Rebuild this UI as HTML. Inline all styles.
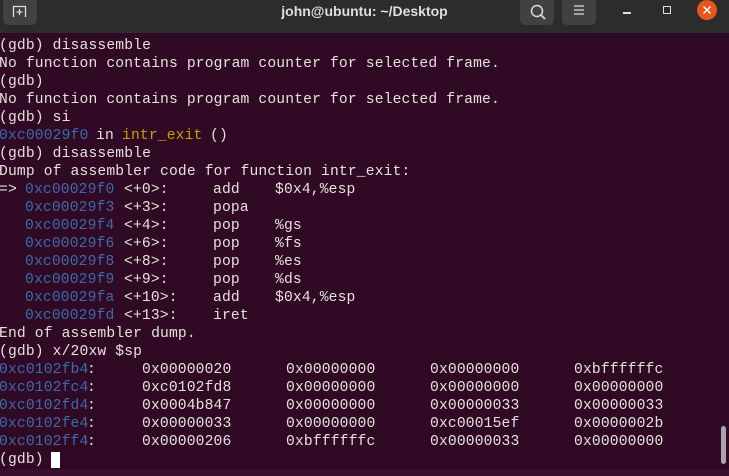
<!DOCTYPE html>
<html><head><style>
body{margin:0;width:729px;height:476px;overflow:hidden;background:#300a24;font-family:"Liberation Mono",monospace;}
#tb{position:absolute;left:0;top:0;width:729px;height:33px;background:#2c2c2c;}
.btn{position:absolute;top:0;height:25px;background:#414141;border-radius:0 0 5px 5px;}
#title{position:absolute;left:0;width:729px;top:3px;text-align:center;color:#dfdfdf;font:bold 14px "Liberation Sans",sans-serif;}
#term{position:absolute;left:-1px;top:37px;color:#e6e1dc;font-size:14.67px;line-height:18px;letter-spacing:0.15px;}
.l{position:relative;height:18px;white-space:pre;}
.l span{position:absolute;top:0;}
.b{color:#3d6aac}.y{color:#c4a000}
</style></head><body>
<div id="tb">
<div class="btn" style="left:3px;width:34px;"></div>
<svg style="position:absolute;left:12px;top:4px" width="16" height="14"><path d="M1.5 13V2.5h12V13" fill="none" stroke="#ddd" stroke-width="1.3"/><path d="M7.5 5v6M4.5 8h6" stroke="#ddd" stroke-width="1.3"/></svg>
<div id="title">john@ubuntu: ~/Desktop</div>
<div class="btn" style="left:520px;width:34px;"></div>
<svg style="position:absolute;left:529px;top:3px" width="18" height="18"><circle cx="8" cy="8" r="5.5" fill="none" stroke="#ddd" stroke-width="1.5"/><path d="M12 12l4 4" stroke="#ddd" stroke-width="1.6"/></svg>
<div class="btn" style="left:562px;width:34px;"></div>
<svg style="position:absolute;left:572px;top:4px" width="14" height="12"><path d="M2 2h10M2 6h10M2 10h10" stroke="#ddd" stroke-width="1.2"/></svg>
<div style="position:absolute;left:623px;top:12px;width:8px;height:1.5px;background:#ddd"></div>
<div style="position:absolute;left:663px;top:6px;width:6px;height:6px;border:1.3px solid #ddd"></div>
<div style="position:absolute;left:697px;top:0px;width:20px;height:20px;border-radius:50%;background:#e95420"></div>
<svg style="position:absolute;left:701px;top:4px" width="12" height="12"><path d="M2.5 2.5l7 7M9.5 2.5l-7 7" stroke="#fff" stroke-width="1.5"/></svg>
</div>
<div id="term">
<div class="l">(gdb) disassemble</div>
<div class="l">No function contains program counter for selected frame.</div>
<div class="l">(gdb)</div>
<div class="l">No function contains program counter for selected frame.</div>
<div class="l">(gdb) si</div>
<div class="l"><span class="b" style="left:0">0xc00029f0</span><span style="left:97px">in</span><span class="y" style="left:123px">intr_exit</span><span style="left:211px">()</span></div>
<div class="l">(gdb) disassemble</div>
<div class="l">Dump of assembler code for function intr_exit:</div>
<div class="l"><span style="left:0">=&gt;</span><span class="b" style="left:26px">0xc00029f0</span><span style="left:125px">&lt;+0&gt;:</span><span style="left:214px">add</span><span style="left:276px">$0x4,%esp</span></div>
<div class="l"><span class="b" style="left:26px">0xc00029f3</span><span style="left:125px">&lt;+3&gt;:</span><span style="left:214px">popa</span></div>
<div class="l"><span class="b" style="left:26px">0xc00029f4</span><span style="left:125px">&lt;+4&gt;:</span><span style="left:214px">pop</span><span style="left:276px">%gs</span></div>
<div class="l"><span class="b" style="left:26px">0xc00029f6</span><span style="left:125px">&lt;+6&gt;:</span><span style="left:214px">pop</span><span style="left:276px">%fs</span></div>
<div class="l"><span class="b" style="left:26px">0xc00029f8</span><span style="left:125px">&lt;+8&gt;:</span><span style="left:214px">pop</span><span style="left:276px">%es</span></div>
<div class="l"><span class="b" style="left:26px">0xc00029f9</span><span style="left:125px">&lt;+9&gt;:</span><span style="left:214px">pop</span><span style="left:276px">%ds</span></div>
<div class="l"><span class="b" style="left:26px">0xc00029fa</span><span style="left:125px">&lt;+10&gt;:</span><span style="left:214px">add</span><span style="left:276px">$0x4,%esp</span></div>
<div class="l"><span class="b" style="left:26px">0xc00029fd</span><span style="left:125px">&lt;+13&gt;:</span><span style="left:214px">iret</span></div>
<div class="l">End of assembler dump.</div>
<div class="l">(gdb) x/20xw $sp</div>
<div class="l"><span class="b" style="left:0">0xc0102fb4</span><span style="left:88px">:</span><span style="left:143px">0x00000020</span><span style="left:287px">0x00000000</span><span style="left:431px">0x00000000</span><span style="left:575px">0xbffffffc</span></div>
<div class="l"><span class="b" style="left:0">0xc0102fc4</span><span style="left:88px">:</span><span style="left:143px">0xc0102fd8</span><span style="left:287px">0x00000000</span><span style="left:431px">0x00000000</span><span style="left:575px">0x00000000</span></div>
<div class="l"><span class="b" style="left:0">0xc0102fd4</span><span style="left:88px">:</span><span style="left:143px">0x0004b847</span><span style="left:287px">0x00000000</span><span style="left:431px">0x00000033</span><span style="left:575px">0x00000033</span></div>
<div class="l"><span class="b" style="left:0">0xc0102fe4</span><span style="left:88px">:</span><span style="left:143px">0x00000033</span><span style="left:287px">0x00000000</span><span style="left:431px">0xc00015ef</span><span style="left:575px">0x0000002b</span></div>
<div class="l"><span class="b" style="left:0">0xc0102ff4</span><span style="left:88px">:</span><span style="left:143px">0x00000206</span><span style="left:287px">0xbffffffc</span><span style="left:431px">0x00000033</span><span style="left:575px">0x00000000</span></div>
<div class="l">(gdb) <span style="left:52px;top:1px;width:9px;height:16px;background:#fff"></span></div>
</div>
<div style="position:absolute;left:721px;top:426px;width:5px;height:38px;border-radius:3px;background:#a9a4a7"></div>
<div style="position:absolute;left:0;top:469px;width:729px;height:7px;background:#3a1030"></div>
</body></html>
